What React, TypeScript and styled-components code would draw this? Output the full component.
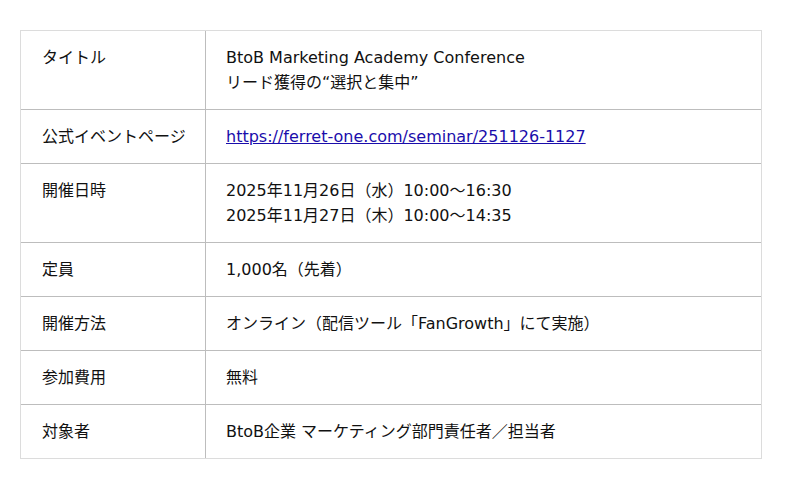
import styled, { createGlobalStyle } from "styled-components";

const GlobalStyle = createGlobalStyle`
  body {
    margin: 0;
    background: #fff;
    font-family: "DejaVu Sans", "Noto Sans CJK JP", sans-serif;
    color: #111;
  }
`;

interface Row {
  label: string;
  lines: string[];
  href?: string;
}

const rows: Row[] = [
  {
    label: "タイトル",
    lines: ["BtoB Marketing Academy Conference", "リード獲得の“選択と集中”"],
  },
  {
    label: "公式イベントページ",
    lines: ["https://ferret-one.com/seminar/251126-1127"],
    href: "https://ferret-one.com/seminar/251126-1127",
  },
  {
    label: "開催日時",
    lines: ["2025年11月26日（水）10:00〜16:30", "2025年11月27日（木）10:00〜14:35"],
  },
  { label: "定員", lines: ["1,000名（先着）"] },
  { label: "開催方法", lines: ["オンライン（配信ツール「FanGrowth」にて実施）"] },
  { label: "参加費用", lines: ["無料"] },
  { label: "対象者", lines: ["BtoB企業 マーケティング部門責任者／担当者"] },
];

export default function App() {
  return (
    <>
      <GlobalStyle />
      <Page>
        <Table>
          <tbody>
            {rows.map((row, i) => (
              <tr key={row.label}>
                <Label $last={i === rows.length - 1}>{row.label}</Label>
                <Value $last={i === rows.length - 1}>
                  {row.lines.map((line) => (
                    <Line key={line}>
                      {row.href ? <Link href={row.href}>{line}</Link> : line}
                    </Line>
                  ))}
                </Value>
              </tr>
            ))}
          </tbody>
        </Table>
      </Page>
    </>
  );
}

const Page = styled.div`
  padding: 30px 20px;
`;

const Table = styled.table`
  width: 742px;
  border-collapse: separate;
  border-spacing: 0;
  border: 1px solid #dcdcdc;
  font-size: 16px;
  line-height: 25px;
`;

const Label = styled.th<{ $last: boolean }>`
  width: 185px;
  box-sizing: border-box;
  padding: 14px 10px 14px 21px;
  text-align: left;
  vertical-align: top;
  font-weight: normal;
  white-space: nowrap;
  border-right: 1px solid #bdbdbd;
  border-bottom: ${(p) => (p.$last ? "none" : "1px solid #bdbdbd")};
`;

const Value = styled.td<{ $last: boolean }>`
  padding: 14px 20px;
  vertical-align: top;
  border-bottom: ${(p) => (p.$last ? "none" : "1px solid #bdbdbd")};
`;

const Line = styled.div``;

const Link = styled.a`
  color: #1a0dab;
  text-decoration: underline;
`;
